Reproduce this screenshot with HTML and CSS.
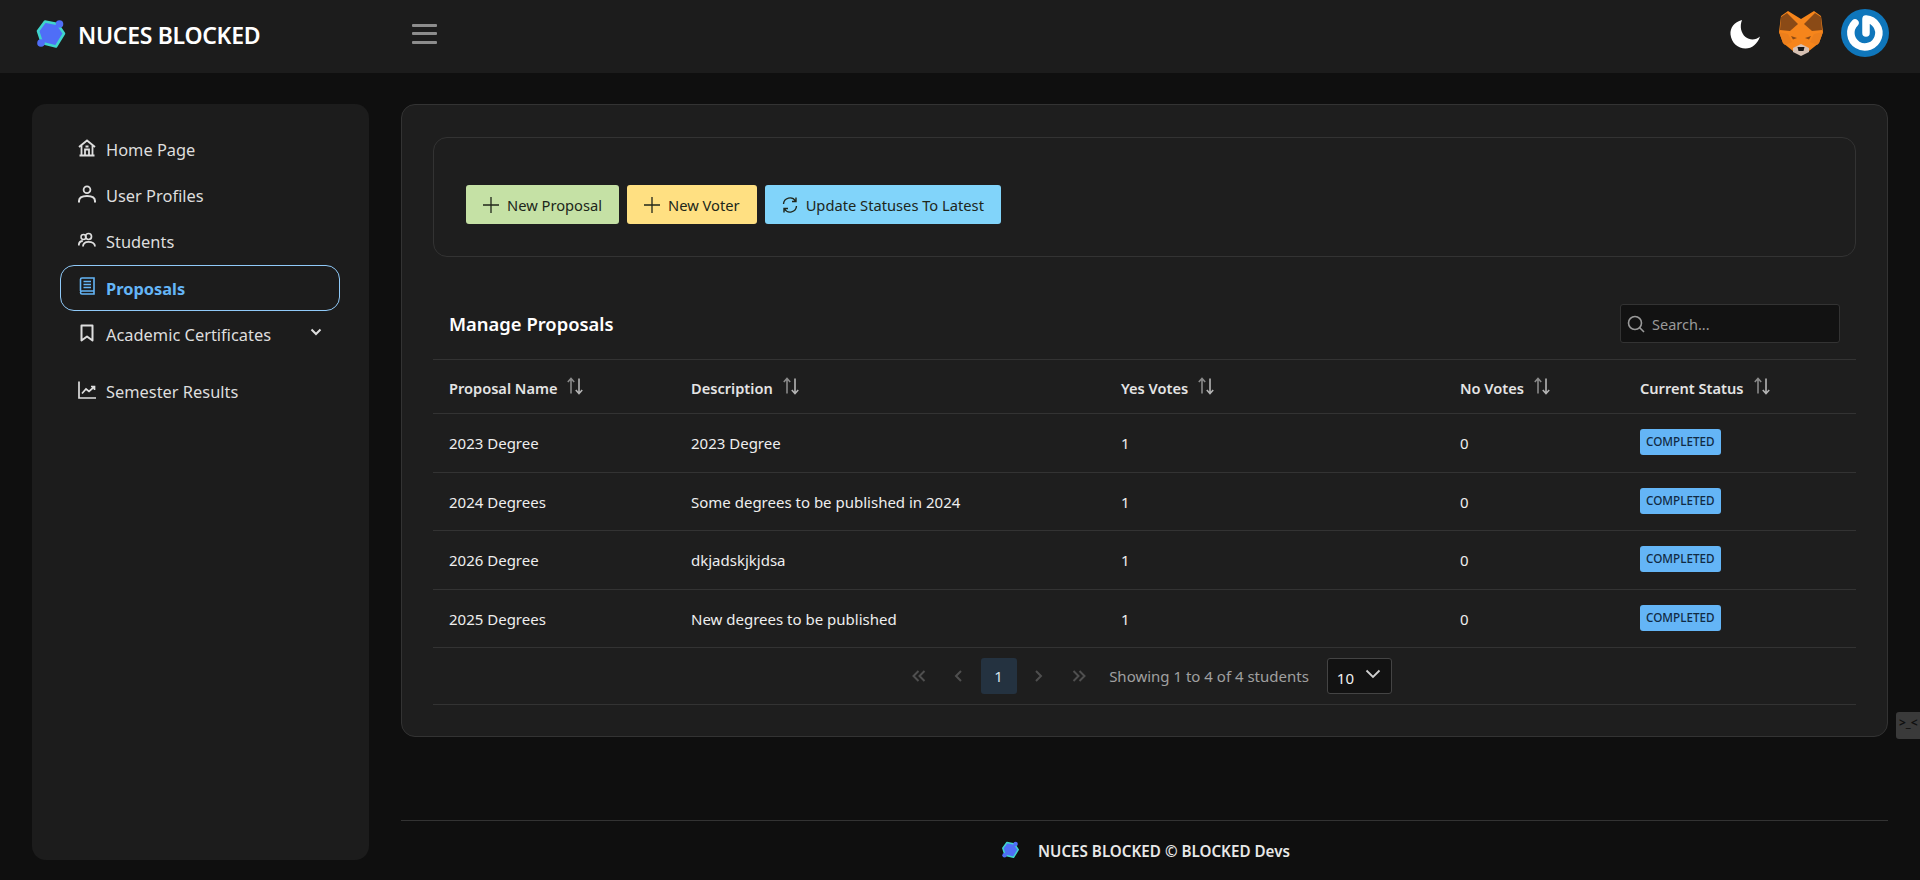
FILE: index.html
```html
<!DOCTYPE html>
<html lang="en">
<head>
<meta charset="utf-8">
<title>NUCES BLOCKED</title>
<link rel="stylesheet" href="styles.css">
</head>
<body>
<svg class="defs" width="0" height="0" aria-hidden="true">
  <defs>
    <symbol id="logo" viewBox="0 0 32 32">
      <polygon points="10,2.500 22.500,5 29,14.500 21,27.500 7,24 3,12" fill="#4f6ef7" stroke="#3fd5cc" stroke-width="2.600" stroke-linejoin="round"/>
      <circle cx="24.500" cy="5" r="3.800" fill="#4f6ef7"/>
      <circle cx="6" cy="24" r="3.800" fill="#4f6ef7"/>
    </symbol>
    <symbol id="sort" viewBox="0 0 18 18">
      <path d="M5 16.500V1.500M1.800 5l3.200-3.500L8.200 5" fill="none" stroke="#8a8a8a" stroke-width="1.600"/>
      <path d="M13 1.500v15M9.800 13l3.200 3.500 3.200-3.500" fill="none" stroke="#b4b4b4" stroke-width="1.600"/>
    </symbol>
  </defs>
</svg>
<header class="topbar">
  <div class="brand">
    <svg class="brand-logo"><use href="#logo"/></svg>
    <span class="brand-name">NUCES BLOCKED</span>
  </div>
  <button class="burger" aria-label="Menu"><span></span><span></span><span></span></button>
  <div class="top-actions">
    <svg class="moon" viewBox="0 0 30 30"><path d="M12 1C4 3 0 9 .5 15.500 1.500 24 8 29.500 15.500 29.500 22 29.500 27.500 25 30 17.500 26 21 20 21.500 15.500 18 11 14 9.500 7.500 12 1Z" fill="#fff"/></svg>
    <svg class="fox" viewBox="0 0 44 46">
      <polygon points="9,1 22,9 35,1 42,6 44,22 40,33 30,41 14,41 4,33 0,22 2,6" fill="#f6851b"/>
      <polygon points="2,7 8,3 19,14 11,21 1,20" fill="#8a4a16"/>
      <polygon points="42,7 36,3 25,14 33,21 43,20" fill="#8a4a16"/>
      <polygon points="0,22 9,24 13,32 6,35 4,33" fill="#ec7f1c"/>
      <polygon points="44,22 35,24 31,32 38,35 40,33" fill="#ec7f1c"/>
      <polygon points="12,26 18,28 14,29.500" fill="#8a4a16"/>
      <polygon points="32,26 26,28 30,29.500" fill="#8a4a16"/>
      <polygon points="14,38 22,34 30,38 30,42 22,46 14,42" fill="#d7c1b3"/>
      <polygon points="18.500,37 25.500,37 24.500,41 19.500,41" fill="#161616"/>
    </svg>
    <svg class="power" viewBox="0 0 48 48">
      <circle cx="24" cy="24" r="24" fill="#0f76bb"/>
      <path d="M14 14A14 14 0 1 0 25 10V24" fill="none" stroke="#fff" stroke-width="7.500" stroke-linecap="round" stroke-linejoin="round"/>
    </svg>
  </div>
</header>

<div class="layout">
  <aside class="sidebar">
    <nav class="menu">
      <a class="item">
        <svg class="ico" viewBox="0 0 18 18"><path d="M1 8 9 1.500 17 8M3.500 6.500V16M14.500 6.500V16M1.500 16.500h15M7 16v-5.500h4V16M7.500 7.500h3" fill="none" stroke="currentColor" stroke-width="1.800"/></svg>
        <span>Home Page</span>
      </a>
      <a class="item">
        <svg class="ico" viewBox="0 0 18 18"><circle cx="9" cy="4.800" r="3.400" fill="none" stroke="currentColor" stroke-width="1.800"/><path d="M1 17.500v-1.500C1 12.500 4 11 9 11s8 1.500 8 5v1.500" fill="none" stroke="currentColor" stroke-width="2"/></svg>
        <span>User Profiles</span>
      </a>
      <a class="item">
        <svg class="ico" viewBox="0 0 18 18"><circle cx="10.500" cy="5.500" r="3" fill="none" stroke="currentColor" stroke-width="1.700"/><circle cx="5.500" cy="6" r="2.500" fill="none" stroke="currentColor" stroke-width="1.500"/><path d="M5 15.500c0-3 2-4.700 5.500-4.700s6.500 1.700 6.500 4.700M.8 14.500c0-3 1.500-4.500 4-4.500" fill="none" stroke="currentColor" stroke-width="1.800"/></svg>
        <span>Students</span>
      </a>
      <a class="item active">
        <svg class="ico" viewBox="0 0 18 18"><path d="M2.500 14V2.500A1.500 1.500 0 0 1 4 1h12v13H4a1.500 1.500 0 0 0 0 3h12v-3M5.500 4.500h7.500M5.500 7.500h7.500M5.500 10.500h7.500" fill="none" stroke="currentColor" stroke-width="1.600"/></svg>
        <span>Proposals</span>
      </a>
      <a class="item">
        <svg class="ico" viewBox="0 0 18 18"><path d="M3.500 1.500h11v15L9 12.500l-5.500 4Z" fill="none" stroke="currentColor" stroke-width="2" stroke-linejoin="round"/></svg>
        <span>Academic Certificates</span>
        <svg class="caret" viewBox="0 0 12 8"><path d="M1.500 1.500 6 6l4.500-4.500" fill="none" stroke="currentColor" stroke-width="2"/></svg>
      </a>
      <a class="item solo">
        <svg class="ico" viewBox="0 0 18 18"><path d="M1 .5V17h17M4 12.500l4-4.500 3 2.500L16 6M13 5.500h3.500V9" fill="none" stroke="currentColor" stroke-width="1.700"/></svg>
        <span>Semester Results</span>
      </a>
    </nav>
  </aside>

  <div class="content">
    <main class="card">
      <section class="toolbar">
        <button class="btn green"><svg class="plus" viewBox="0 0 16 16"><path d="M8 0v16M0 8h16" stroke="currentColor" stroke-width="1.300"/></svg>New Proposal</button>
        <button class="btn yellow"><svg class="plus" viewBox="0 0 16 16"><path d="M8 0v16M0 8h16" stroke="currentColor" stroke-width="1.300"/></svg>New Voter</button>
        <button class="btn blue"><svg class="plus" viewBox="0 0 16 16"><path d="M1.500 7A6.500 6.500 0 0 1 13.500 4M14.500 9A6.500 6.500 0 0 1 2.500 12M14 .5V4.500h-4M2 15.500V11.500h4" fill="none" stroke="currentColor" stroke-width="1.400"/></svg>Update Statuses To Latest</button>
      </section>

      <div class="table-head">
        <h2>Manage Proposals</h2>
        <label class="search">
          <svg class="search-ico" viewBox="0 0 18 18"><circle cx="8" cy="8" r="6.500" fill="none" stroke="currentColor" stroke-width="1.600"/><path d="M12.500 12.500 17 17" stroke="currentColor" stroke-width="1.600"/></svg>
          <span>Search...</span>
        </label>
      </div>

      <table class="grid">
        <colgroup><col class="c1"><col class="c2"><col class="c3"><col class="c4"><col class="c5"></colgroup>
        <thead>
          <tr>
            <th><span class="th">Proposal Name<svg class="sort"><use href="#sort"/></svg></span></th>
            <th><span class="th">Description<svg class="sort"><use href="#sort"/></svg></span></th>
            <th><span class="th">Yes Votes<svg class="sort"><use href="#sort"/></svg></span></th>
            <th><span class="th">No Votes<svg class="sort"><use href="#sort"/></svg></span></th>
            <th><span class="th">Current Status<svg class="sort"><use href="#sort"/></svg></span></th>
          </tr>
        </thead>
        <tbody>
          <tr><td>2023 Degree</td><td>2023 Degree</td><td>1</td><td>0</td><td><span class="tag">COMPLETED</span></td></tr>
          <tr><td>2024 Degrees</td><td>Some degrees to be published in 2024</td><td>1</td><td>0</td><td><span class="tag">COMPLETED</span></td></tr>
          <tr><td>2026 Degree</td><td>dkjadskjkjdsa</td><td>1</td><td>0</td><td><span class="tag">COMPLETED</span></td></tr>
          <tr><td>2025 Degrees</td><td>New degrees to be published</td><td>1</td><td>0</td><td><span class="tag">COMPLETED</span></td></tr>
        </tbody>
      </table>

      <div class="pager">
        <svg class="pg outer-l" viewBox="0 0 16 16"><path d="M7.500 3 2.500 8l5 5M13.500 3l-5 5 5 5" fill="none" stroke="currentColor" stroke-width="2"/></svg>
        <svg class="pg" viewBox="0 0 16 16"><path d="M10 3 5 8l5 5" fill="none" stroke="currentColor" stroke-width="2"/></svg>
        <span class="page-no">1</span>
        <svg class="pg" viewBox="0 0 16 16"><path d="m6 3 5 5-5 5" fill="none" stroke="currentColor" stroke-width="2"/></svg>
        <svg class="pg outer-r" viewBox="0 0 16 16"><path d="m2.500 3 5 5-5 5M8.500 3l5 5-5 5" fill="none" stroke="currentColor" stroke-width="2"/></svg>
        <span class="showing">Showing 1 to 4 of 4 students</span>
        <span class="per-page"><span class="per-num">10</span><svg class="per-caret" viewBox="0 0 16 10"><path d="M1.500 1.500 8 8l6.500-6.500" fill="none" stroke="currentColor" stroke-width="1.800"/></svg></span>
      </div>
    </main>

    <footer class="foot">
      <svg class="foot-logo"><use href="#logo"/></svg>
      <span>NUCES BLOCKED © BLOCKED Devs</span>
    </footer>
  </div>
</div>

<div class="hint" aria-hidden="true">&gt;_&lt;</div>
</body>
</html>
```

FILE: styles.css
```css
* { box-sizing: border-box; }
html, body { height: 100%; }
body {
  margin: 0;
  height: 880px;
  overflow: hidden;
  background: #0f0f0f;
  color: #e8e8e8;
  font-family: "Noto Sans", "Open Sans", sans-serif;
  font-size: 15px;
  position: relative;
}
.defs { position: absolute; }

.topbar {
  height: 73px;
  background: #1c1c1c;
  display: flex;
  align-items: center;
  padding: 0 31px 0 35px;
}
.brand { display: flex; align-items: center; width: 377px; margin-top: -4px; }
.brand-logo { width: 32px; height: 32px; margin-right: 11px; }
.brand-name { font-size: 23px; font-weight: 600; color: #fff; letter-spacing: -0.3px; }
.burger {
  width: 25px; height: 20px; padding: 0; border: 0; background: none;
  display: flex; flex-direction: column; justify-content: space-between;
  margin-top: -6px;
}
.burger span { display: block; height: 3px; background: #8c8c8c; border-radius: 1px; }
.top-actions { margin-left: auto; display: flex; align-items: center; }
.moon { width: 30px; height: 30px; margin-right: 19px; margin-top: -6px; }
.fox { width: 44px; height: 46px; margin-right: 18px; margin-top: -8px; }
.power { width: 48px; height: 48px; margin-top: -8px; }

.layout {
  display: flex;
  align-items: flex-start;
  padding: 31px 32px 0 32px;
  gap: 32px;
}
.sidebar {
  width: 337px;
  height: 756px;
  flex: none;
  background: #1c1c1c;
  border-radius: 14px;
  padding: 22px 29px 22px 28px;
}
.menu { display: flex; flex-direction: column; gap: 0.300px; }
.item {
  height: 46px;
  display: flex;
  align-items: center;
  padding: 0 17px;
  border: 1px solid transparent;
  border-radius: 14px;
  color: #dedede;
  font-size: 16.400px;
}
.item.active { border-color: #90caf9; color: #64b5f6; font-weight: 700; }
.item.active span { padding-top: 2px; }
.item.solo { margin-top: 11px; }
.ico { width: 18px; height: 18px; margin-right: 10px; flex: none; margin-top: -3px; }
.caret { width: 12px; height: 8px; margin-left: auto; margin-top: -4px; }

.content { width: 1487px; flex: none; }
.card {
  height: 633px;
  background: #1e1e1e;
  border: 1px solid #333;
  border-radius: 14px;
  padding: 32px 31px;
}
.toolbar {
  height: 120px;
  border: 1px solid #333;
  border-radius: 14px;
  display: flex;
  align-items: center;
  gap: 8px;
  padding: 15px 32px 0;
}
.btn {
  height: 39px;
  border: 0;
  border-radius: 3px;
  padding: 0 17px;
  display: flex;
  align-items: center;
  font-family: inherit;
  font-size: 14.700px;
  color: #20261a;
}
.plus { width: 16px; height: 16px; margin-right: 8px; flex: none; }
.green { background: #c5e1a5; }
.yellow { background: #ffe082; }
.blue { background: #81d4fa; }

.table-head {
  height: 102px;
  display: flex;
  align-items: flex-end;
  justify-content: space-between;
  padding: 0 16px 16px;
}
.table-head h2 { margin: 0 0 7px; font-size: 18.400px; line-height: 24px; font-weight: 600; color: #fff; }
.search {
  width: 220px;
  height: 39px;
  background: #121212;
  border: 1px solid #333;
  border-radius: 3px;
  display: flex;
  align-items: center;
  padding: 0 6px;
  color: #9a9a9a;
  font-size: 14.500px;
}
.search-ico { width: 18px; height: 18px; margin-right: 7px; }

.grid { width: 100%; table-layout: fixed; border-collapse: collapse; }
.c1 { width: 242px; }
.c2 { width: 430px; }
.c3 { width: 339px; }
.c4 { width: 180px; }
.grid th, .grid td { text-align: left; padding: 0 0 0 16px; }
.grid th {
  height: 54px;
  padding-top: 2px;
  border-top: 1px solid #333;
  border-bottom: 1px solid #333;
  font-size: 14.600px;
  font-weight: 600;
  color: #e4e4e4;
}
.grid td {
  height: 58.500px;
  padding-top: 1px;
  border-bottom: 1px solid #333;
  font-size: 15px;
  color: #eeeeee;
}
.th { display: inline-flex; align-items: center; }
.sort { width: 18px; height: 18px; margin-left: 9px; margin-top: -3px; }
.tag {
  display: inline-block;
  height: 26px;
  line-height: 24px;
  padding: 0 6px;
  border-radius: 3px;
  background: #64b5f6;
  color: #102a43;
  font-size: 11.700px;
  font-weight: 500;
  vertical-align: middle;
  margin-top: -2px;
}

.pager {
  height: 57px;
  border-bottom: 1px solid #333;
  display: flex;
  align-items: center;
  justify-content: center;
  color: #4f4f4f;
  padding-left: 3px;
}
.pg { width: 16px; height: 16px; margin: 0 10.500px; flex: none; }
.outer-l { margin-right: 14px; }
.outer-r { margin-left: 14px; }
.page-no {
  width: 36px; height: 36px;
  margin: 0 3px;
  background: #243240;
  border-radius: 3px;
  display: flex; align-items: center; justify-content: center;
  color: #d8e4ee;
}
.showing { margin-left: 12px; color: #a0a0a0; font-size: 15px; }
.per-page {
  margin-left: 18px;
  width: 65px; height: 36px;
  background: #121212;
  border: 1px solid #444;
  border-radius: 3px;
  display: flex; align-items: center;
  padding-left: 9px;
  color: #f0f0f0;
}
.per-num { margin-top: 3px; }
.per-caret { width: 16px; height: 10px; margin-left: 11px; margin-top: -4px; color: #d0d0d0; }

.foot {
  margin-top: 83px;
  height: 60px;
  border-top: 1px solid #333;
  display: flex;
  align-items: center;
  justify-content: center;
  font-size: 15.200px;
  font-weight: 600;
  color: #e8e8e8;
  gap: 18px;
  padding-left: 2px;
}
.foot-logo { width: 19px; height: 19px; }

.hint {
  position: absolute;
  right: 0; top: 712px;
  width: 24px; height: 27px;
  background: #3a3a3a;
  border-radius: 3px 0 0 3px;
  color: #0f0f0f;
  font-size: 12px;
  font-weight: 700;
  line-height: 22px;
  padding-left: 3px;
  white-space: nowrap;
  overflow: hidden;
}
```
